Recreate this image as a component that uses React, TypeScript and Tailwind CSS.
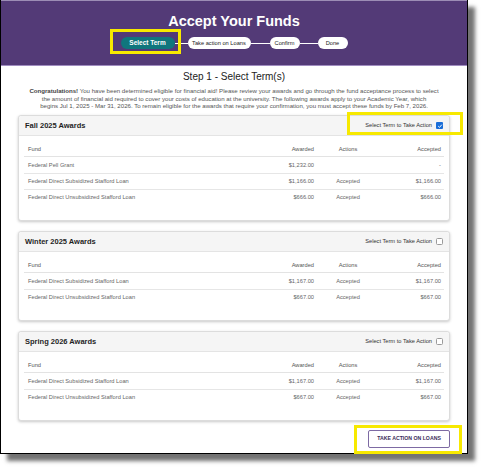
import type React from "react";

interface AwardRow {
  fund: string;
  awarded: string;
  action: string;
  accepted: string;
}

interface TermCardProps {
  title: string;
  checked: boolean;
  rows: AwardRow[];
  highlight?: boolean;
}

const fall: AwardRow[] = [
  { fund: "Federal Pell Grant", awarded: "$1,232.00", action: "", accepted: "-" },
  { fund: "Federal Direct Subsidized Stafford Loan", awarded: "$1,166.00", action: "Accepted", accepted: "$1,166.00" },
  { fund: "Federal Direct Unsubsidized Stafford Loan", awarded: "$666.00", action: "Accepted", accepted: "$666.00" },
];

const winter: AwardRow[] = [
  { fund: "Federal Direct Subsidized Stafford Loan", awarded: "$1,167.00", action: "Accepted", accepted: "$1,167.00" },
  { fund: "Federal Direct Unsubsidized Stafford Loan", awarded: "$667.00", action: "Accepted", accepted: "$667.00" },
];

// grid for the award table: Fund | Awarded | Actions | Accepted
const cols = "grid grid-cols-[1fr_70px_60px_66px] items-center";

const Checkbox: React.FC<{ checked: boolean }> = ({ checked }) =>
  checked ? (
    <span className="flex h-[7px] w-[7px] items-center justify-center rounded-[1px] bg-[#1a6ed8]">
      <svg viewBox="0 0 10 10" className="h-[6px] w-[6px]">
        <path d="M2 5.2 L4.2 7.3 L8 2.8" fill="none" stroke="white" strokeWidth="1.6" />
      </svg>
    </span>
  ) : (
    <span className="h-[7px] w-[7px] rounded-[1.5px] border border-[#9a9a9a] bg-white" />
  );

const TermCard: React.FC<TermCardProps> = ({ title, checked, rows, highlight }) => (
  <div className="rounded-[3px] border border-[#dcdcdc] bg-white shadow-[0_1px_3px_rgba(0,0,0,0.22)]">
    <div className="relative flex h-[20px] items-center justify-between rounded-t-[3px] border-b border-[#e4e4e4] bg-[#f5f5f5] pl-[6px] pr-[6px]">
      <span className="text-[7.5px] font-bold text-[#1f1f1f]">{title}</span>
      <span className="flex items-center gap-[4px] text-[5.7px] text-[#333]">
        Select Term to Take Action
        <Checkbox checked={checked} />
      </span>
      {highlight && (
        <div className="absolute left-[328px] right-[-14px] top-[-4px] bottom-0 border-[3px] border-[#f7e900]" />
      )}
    </div>
    <div className="px-[5px] pb-[15px] pt-[6px] text-[5.7px]">
      <div className={`${cols} h-[15px] border-b border-[#e3e3e3] text-[#555]`}>
        <span className="pl-[4px]">Fund</span>
        <span className="pr-[4px] text-right">Awarded</span>
        <span className="text-center">Actions</span>
        <span className="pr-[3px] text-right">Accepted</span>
      </div>
      {rows.map((r, i) => (
        <div
          key={r.fund}
          className={`${cols} h-[16px] text-[#666] ${i > 0 ? "border-t border-[#e6e6e6]" : ""}`}
        >
          <span className="pl-[4px]">{r.fund}</span>
          <span className="pr-[4px] text-right">{r.awarded}</span>
          <span className="text-center">{r.action}</span>
          <span className="pr-[3px] text-right">{r.accepted}</span>
        </div>
      ))}
    </div>
  </div>
);

const Connector: React.FC<{ w: string }> = ({ w }) => <span className={`h-px bg-white ${w}`} />;

export default function App() {
  return (
    <div className="h-[472px] w-[483px] bg-white font-['Liberation_Sans',Arial,sans-serif]">
      <div className="relative h-[454px] w-[468px] border-b-[1.5px] border-l border-r-[1.5px] border-black bg-white shadow-[7px_7px_4px_rgba(0,0,0,0.55)]">
        {/* purple banner */}
        <div className="flex h-[66px] flex-col items-center border-t border-b border-t-[#9c8db5] border-b-[#a08cc0] bg-[#533a77] pt-[12px]">
          <h1 className="text-[14.5px] font-bold leading-[17px] text-white">Accept Your Funds</h1>
          <div className="mt-[7px] flex items-center">
            <span className="relative flex h-[12px] w-[54px] items-center justify-center rounded-full bg-[#10767d] text-[6.5px] font-bold text-white">
              Select Term
              <span className="absolute -left-[11px] -right-[6px] -top-[8px] -bottom-[5px] border-[3px] border-[#f7e900]" />
            </span>
            <Connector w="w-[13px]" />
            <span className="flex h-[12px] w-[63px] items-center justify-center rounded-full bg-white text-[5.7px] text-[#222]">
              Take action on Loans
            </span>
            <Connector w="w-[19px]" />
            <span className="flex h-[12px] w-[30px] items-center justify-center rounded-full bg-white text-[5.7px] text-[#222]">
              Confirm
            </span>
            <Connector w="w-[18px]" />
            <span className="flex h-[12px] w-[30px] items-center justify-center rounded-full bg-white text-[5.7px] text-[#222]">
              Done
            </span>
          </div>
        </div>

        {/* body */}
        <div className="px-[17px] pt-[5px]">
          <h2 className="text-center text-[10px] leading-[12px] text-[#222]">Step 1 - Select Term(s)</h2>
          <p className="mt-[4px] text-center text-[6.1px] leading-[7.7px] text-[#555]">
            <b className="text-[#444]">Congratulations!</b> You have been determined eligible for financial aid! Please review your awards and go through the fund acceptance process to select
            <br />
            the amount of financial aid required to cover your costs of education at the university. The following awards apply to your Academic Year, which
            <br />
            begins Jul 1, 2025 - Mar 31, 2026. To remain eligible for the awards that require your confirmation, you must accept these funds by Feb 7, 2026.
          </p>

          <div className="mt-[5px] flex flex-col gap-[10px]">
            <TermCard title="Fall 2025 Awards" checked rows={fall} highlight />
            <TermCard title="Winter 2025 Awards" checked={false} rows={winter} />
            <TermCard title="Spring 2026 Awards" checked={false} rows={winter} />
          </div>

          <div className="mt-[9px] flex justify-end">
            <button className="relative h-[18px] w-[82px] rounded-[2px] border border-[#7d6aa3] bg-white text-[5.2px] font-bold text-[#3b2d5a]">
              TAKE ACTION ON LOANS
              <span className="absolute -left-[15px] -right-[13px] -top-[6px] -bottom-[7px] border-[3px] border-[#f7e900]" />
            </button>
          </div>
        </div>
      </div>
    </div>
  );
}
